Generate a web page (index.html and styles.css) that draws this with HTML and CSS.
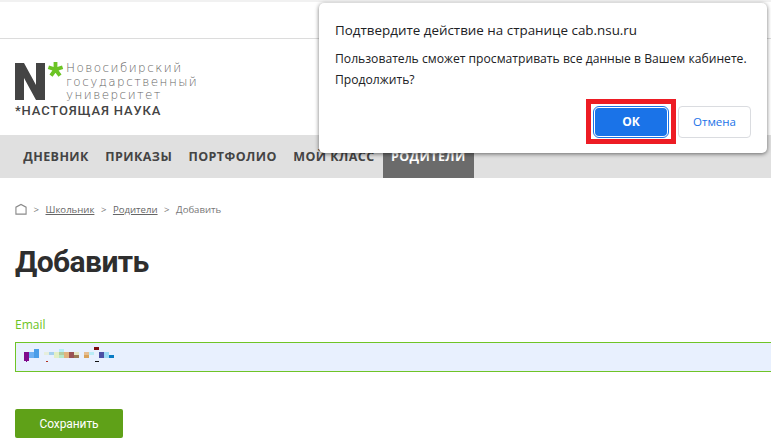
FILE: index.html
```html
<!DOCTYPE html>
<html lang="ru">
<head>
<meta charset="utf-8">
<title>Добавить</title>
<link rel="stylesheet" href="styles.css">
</head>
<body>
<div class="topstrip"></div>
<div class="topbar"></div>
<header class="logo">
  <svg class="logo-mark" width="50" height="40" viewBox="0 0 50 40">
    <path d="M0 1H9L21 23V1H30V38H21L9 16V38H0Z" fill="#444"/>
    <path d="M40.500 7.500V0M40.500 7.500L47.600 5.200M40.500 7.500L45 13.600M40.500 7.500L36 13.600M40.500 7.500L33.400 5.200" fill="none" stroke="#6cc424" stroke-width="3.800"/>
  </svg>
  <div class="logo-name"><span>Новосибирский</span><span>государственный</span><span>университет</span></div>
  <div class="logo-tag">*НАСТОЯЩАЯ НАУКА</div>
</header>
<nav class="menu">
  <a class="menu-item">ДНЕВНИК</a>
  <a class="menu-item">ПРИКАЗЫ</a>
  <a class="menu-item">ПОРТФОЛИО</a>
  <a class="menu-item">МОЙ КЛАСС</a>
  <a class="menu-item active">РОДИТЕЛИ</a>
</nav>
<main class="content">
  <div class="crumbs">
    <svg class="home" width="12" height="13" viewBox="0 0 13 13"><path d="M1 11.500V4L6.500 1 12 4V11.500Z" fill="none" stroke="#8a8a8a" stroke-width="1.200"/></svg>
    <span>&gt;</span><a>Школьник</a><span>&gt;</span><a>Родители</a><span>&gt;</span><span>Добавить</span>
  </div>
  <h1>Добавить</h1>
  <label class="field-label">Email</label>
  <div class="input">
    <svg class="blur" width="100" height="20" viewBox="0 0 100 20" shape-rendering="crispEdges">
      <rect x="0" y="5" width="5" height="9" fill="#800a8c"/><rect x="1.500" y="14" width="1" height="1" fill="#800a8c"/>
      <rect x="5" y="5" width="5" height="6" fill="#6eb0f2"/><rect x="10" y="2" width="5" height="9" fill="#4b9de8"/>
      <rect x="20" y="5" width="5" height="3" fill="#e6eedd"/><rect x="25" y="5" width="5" height="3" fill="#a4d0ee"/>
      <rect x="30" y="5" width="5" height="6" fill="#e2efc6"/><rect x="35" y="2" width="5" height="3" fill="#b7edf7"/>
      <rect x="35" y="5" width="5" height="3" fill="#b3cc9f"/><rect x="35" y="8" width="5" height="3" fill="#b6e7c8"/>
      <rect x="40" y="5" width="5" height="6" fill="#e2b27d"/><rect x="45" y="5" width="5" height="6" fill="#9a5255"/>
      <rect x="50" y="5" width="5" height="3" fill="#e5e7c4"/><rect x="50" y="8" width="5" height="3" fill="#9a7a54"/>
      <rect x="60" y="5" width="5" height="3" fill="#e6bd91"/><rect x="60" y="8" width="5" height="3" fill="#d8a25c"/>
      <rect x="65" y="5" width="5" height="3" fill="#b9ecf6"/><rect x="70" y="0" width="5" height="3" fill="#7d0a10"/>
      <rect x="75" y="5" width="5" height="6" fill="#4b50a4"/><rect x="80" y="5" width="5" height="6" fill="#9ddcf6"/>
      <rect x="85" y="8" width="5" height="3" fill="#0a7cc4"/>
      <rect x="22" y="14" width="2" height="1" fill="#b03020"/><rect x="71" y="14" width="4" height="1" fill="#111"/>
    </svg>
  </div>
  <button class="save">Сохранить</button>
</main>
<section class="dialog">
  <h2>Подтвердите действие на странице cab.nsu.ru</h2>
  <p>Пользователь сможет просматривать все данные в Вашем кабинете.<br>Продолжить?</p>
  <div class="actions">
    <div class="highlight"><button class="ok">ОК</button></div>
    <button class="cancel">Отмена</button>
  </div>
</section>
</body>
</html>
```

FILE: styles.css
```css
html, body { margin: 0; padding: 0; }
body {
  width: 771px;
  height: 447px;
  overflow: hidden;
  background: #fff;
  font-family: "Open Sans", "Noto Sans", sans-serif;
  position: relative;
}
.topstrip { height: 2px; background: #f1f1f1; }
.topbar { height: 36px; border-bottom: 1px solid #dcdcdc; }

.logo {
  height: 96px;
  padding: 23px 0 0 15px;
  box-sizing: border-box;
  display: grid;
  grid-template-columns: 51px auto;
  grid-template-rows: 41.500px auto;
  justify-content: start;
}
.logo-mark { grid-row: 1; grid-column: 1; display: block; }
.logo-name {
  grid-row: 1; grid-column: 2;
  display: flex;
  flex-direction: column;
  font-family: "DejaVu Sans", sans-serif;
  font-weight: 200;
  font-size: 12px;
  line-height: 13.700px;
  letter-spacing: 1.450px;
  color: #666;
  white-space: nowrap;
}
.logo-tag {
  grid-row: 2; grid-column: 1 / 3;
  font-family: "Roboto", sans-serif;
  font-weight: 500;
  font-size: 13px;
  line-height: 14px;
  letter-spacing: 0.850px;
  color: #444;
  white-space: nowrap;
}

.menu {
  height: 43px;
  background: #e0e0e0;
  display: flex;
  padding-left: 15px;
}
.menu-item {
  padding: 0 8.200px;
  line-height: 44px;
  font-family: "Open Sans", sans-serif;
  font-weight: 700;
  font-size: 12.500px;
  letter-spacing: 0.420px;
  color: #444;
  white-space: nowrap;
}
.menu-item.active { background: #6b6b6b; color: #fff; }

.content { padding: 23px 0 0 15px; }
.crumbs {
  display: flex;
  align-items: center;
  gap: 6.500px;
  height: 16px;
  font-size: 9.600px;
  color: #777;
}
.crumbs a { color: #666; text-decoration: underline; }
h1 {
  margin: 25px 0 0;
  font-family: "Roboto", sans-serif;
  font-weight: 700;
  font-size: 30px;
  line-height: 40px;
  letter-spacing: -0.600px;
  color: #2e2e2e;
}
.field-label {
  display: block;
  margin-top: 35px;
  font-size: 12px;
  line-height: 16px;
  color: #6cc424;
}
.input {
  margin-top: 9px;
  height: 28px;
  background: #e8f0fe;
  border: 1px solid #6fc427;
  border-right: 0;
  display: flex;
  align-items: center;
  padding-left: 8px;
}
.blur { display: block; }
.save {
  display: block;
  margin-top: 37px;
  width: 108px;
  height: 29px;
  padding: 0;
  border: 0;
  border-radius: 2px;
  background: #5fa118;
  color: #fff;
  font-family: "Roboto", sans-serif;
  font-size: 12px;
  letter-spacing: -0.100px;
}

.dialog {
  position: absolute;
  left: 319px;
  top: 3px;
  width: 448px;
  height: 150px;
  box-sizing: border-box;
  padding: 17px 16px 0;
  background: #fff;
  border-radius: 5px;
  box-shadow: 0 1px 4px rgba(0,0,0,.55);
  color: #202124;
}
.dialog h2 {
  margin: 0;
  font-family: "Open Sans", sans-serif;
  font-weight: 400;
  font-size: 13.400px;
  line-height: 20px;
}
.dialog p {
  margin: 8px 0 0;
  font-size: 12.150px;
  line-height: 21px;
  white-space: nowrap;
}
.actions {
  position: absolute;
  right: 16px;
  top: 96px;
  display: flex;
  align-items: center;
  gap: 2px;
}
.highlight {
  width: 90px;
  height: 45px;
  box-sizing: border-box;
  border: 5px solid #ed1c24;
  background: #fff;
  display: flex;
  align-items: center;
  justify-content: center;
}
.ok {
  width: 72px;
  height: 28px;
  padding: 0;
  border: 0;
  border-radius: 4px;
  background: #1a73e8;
  outline: 1px solid #1a73e8;
  outline-offset: 1px;
  color: #fff;
  font-family: "Open Sans", sans-serif;
  font-weight: 700;
  font-size: 12px;
}
.cancel {
  width: 73px;
  height: 32px;
  padding: 0;
  border: 1px solid #dadce0;
  border-radius: 4px;
  background: #fff;
  color: #1a73e8;
  font-family: "Open Sans", sans-serif;
  font-weight: 400;
  font-size: 11.500px;
}
```
